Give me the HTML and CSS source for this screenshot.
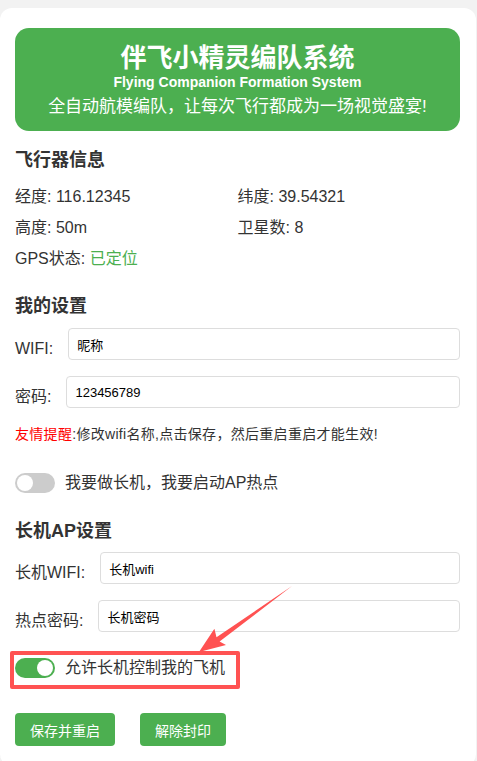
FILE: index.html
```html
<!DOCTYPE html>
<html lang="zh-CN">
<head>
<meta charset="utf-8">
<title>伴飞小精灵编队系统</title>
<link rel="stylesheet" href="styles.css">
</head>
<body>
<div class="card">
  <header class="hero">
    <h1 class="hero-title">伴飞小精灵编队系统</h1>
    <div class="hero-sub">Flying Companion Formation System</div>
    <div class="hero-tag">全自动航模编队，让每次飞行都成为一场视觉盛宴!</div>
  </header>

  <h2 class="section-title first">飞行器信息</h2>
  <div class="info-grid">
    <div>经度: 116.12345</div>
    <div>纬度: 39.54321</div>
    <div>高度: 50m</div>
    <div>卫星数: 8</div>
    <div>GPS状态: <span class="ok">已定位</span></div>
  </div>

  <h2 class="section-title">我的设置</h2>
  <div class="form-row">
    <label class="form-label">WIFI:</label>
    <input class="form-input" type="text" value="昵称">
  </div>
  <div class="form-row">
    <label class="form-label">密码:</label>
    <input class="form-input" type="text" value="123456789">
  </div>
  <p class="reminder"><span class="warn">友情提醒</span>:修改wifi名称,点击保存，然后重启重启才能生效!</p>

  <div class="toggle-row toggle-ap">
    <span class="switch"><span class="knob"></span></span>
    <span class="toggle-label">我要做长机，我要启动AP热点</span>
  </div>

  <h2 class="section-title ap-title">长机AP设置</h2>
  <div class="form-row">
    <label class="form-label">长机WIFI:</label>
    <input class="form-input" type="text" value="长机wifi">
  </div>
  <div class="form-row">
    <label class="form-label">热点密码:</label>
    <input class="form-input" type="text" value="长机密码">
  </div>

  <div class="toggle-row toggle-allow">
    <span class="switch on"><span class="knob"></span></span>
    <span class="toggle-label">允许长机控制我的飞机</span>
    <span class="mark-box"></span>
  </div>

  <div class="actions">
    <button class="btn">保存并重启</button>
    <button class="btn">解除封印</button>
  </div>
</div>

<svg class="arrow" width="477" height="761" viewBox="0 0 477 761" aria-hidden="true">
  <polygon fill="#ff5252" points="199,652 214.4,628.7 216.5,637.3 292,586 219.6,641.6 226,645.1"/>
</svg>
</body>
</html>
```

FILE: styles.css
```css
* { box-sizing: border-box; }

html, body {
  margin: 0;
  padding: 0;
}

body {
  position: relative;
  background: #f2f2f2;
  font-family: "Liberation Sans", "Noto Sans CJK SC", Arial, sans-serif;
  color: #333;
  height: 761px;
  overflow: hidden;
}

.card {
  background: #fff;
  margin: 8px 1px 0 0;
  border-radius: 12px;
  padding: 20px 16px 20px 15px;
  min-height: 753px;
}

.hero {
  background: #4caf50;
  color: #fff;
  border-radius: 14px;
  text-align: center;
  padding: 15px 0 13px;
}

.hero-title {
  margin: 0;
  font-size: 26px;
  line-height: 30px;
  font-weight: bold;
}

.hero-sub {
  margin-top: 1px;
  font-size: 14px;
  line-height: 16px;
  font-weight: bold;
}

.hero-tag {
  margin-top: 6px;
  font-size: 17px;
  line-height: 22px;
}

.section-title {
  margin: 24px 0 10px;
  font-size: 18px;
  line-height: 24px;
  font-weight: bold;
  color: #333;
}

.section-title.first {
  margin-top: 17px;
  margin-bottom: 14px;
}

.section-title.ap-title {
  margin-top: 25px;
  margin-bottom: 9px;
}

.info-grid {
  display: grid;
  grid-template-columns: 1fr 1fr;
  row-gap: 9px;
  font-size: 16px;
  line-height: 22px;
}

.ok { color: #4caf50; }

.form-row {
  display: flex;
  align-items: flex-end;
  gap: 15px;
  margin-bottom: 16px;
}

.form-label {
  font-size: 16px;
  line-height: 22px;
  color: #333;
  white-space: nowrap;
}

.form-input {
  flex: 1;
  min-width: 0;
  height: 32px;
  border: 1px solid #ddd;
  border-radius: 4px;
  padding: 0 8px;
  font-family: "Liberation Sans", "Noto Sans CJK SC", Arial, sans-serif;
  font-size: 13px;
  color: #000;
  background: #fff;
}

.reminder {
  margin: 0;
  font-size: 14px;
  line-height: 20px;
  letter-spacing: 0.3px;
  color: #333;
}

.warn { color: #f00; }

.toggle-row {
  position: relative;
  display: inline-flex;
  align-items: center;
  gap: 10px;
  height: 22px;
}

.toggle-ap { margin-top: 28px; display: flex; }

.toggle-allow { margin-top: 9px; }

.switch {
  position: relative;
  display: inline-block;
  width: 40px;
  height: 20px;
  border-radius: 10px;
  background: #ccc;
  flex: none;
}

.switch .knob {
  position: absolute;
  top: 2px;
  left: 2px;
  width: 16px;
  height: 16px;
  border-radius: 50%;
  background: #fff;
}

.switch.on { background: #4caf50; }
.switch.on .knob { left: 22px; }

.toggle-label {
  font-size: 16px;
  line-height: 22px;
  color: #333;
}

.mark-box {
  position: absolute;
  left: -5px;
  right: -15px;
  top: -6px;
  bottom: -10px;
  border: 4px solid #ff5252;
  border-radius: 2px;
  pointer-events: none;
}

.actions {
  display: flex;
  gap: 25px;
  margin-top: 31px;
}

.btn {
  height: 33px;
  padding: 0 15px;
  border: none;
  border-radius: 4px;
  background: #4caf50;
  color: #fff;
  font-family: "Liberation Sans", "Noto Sans CJK SC", Arial, sans-serif;
  font-size: 14px;
}

.arrow {
  position: absolute;
  left: 0;
  top: 0;
  pointer-events: none;
}
```
